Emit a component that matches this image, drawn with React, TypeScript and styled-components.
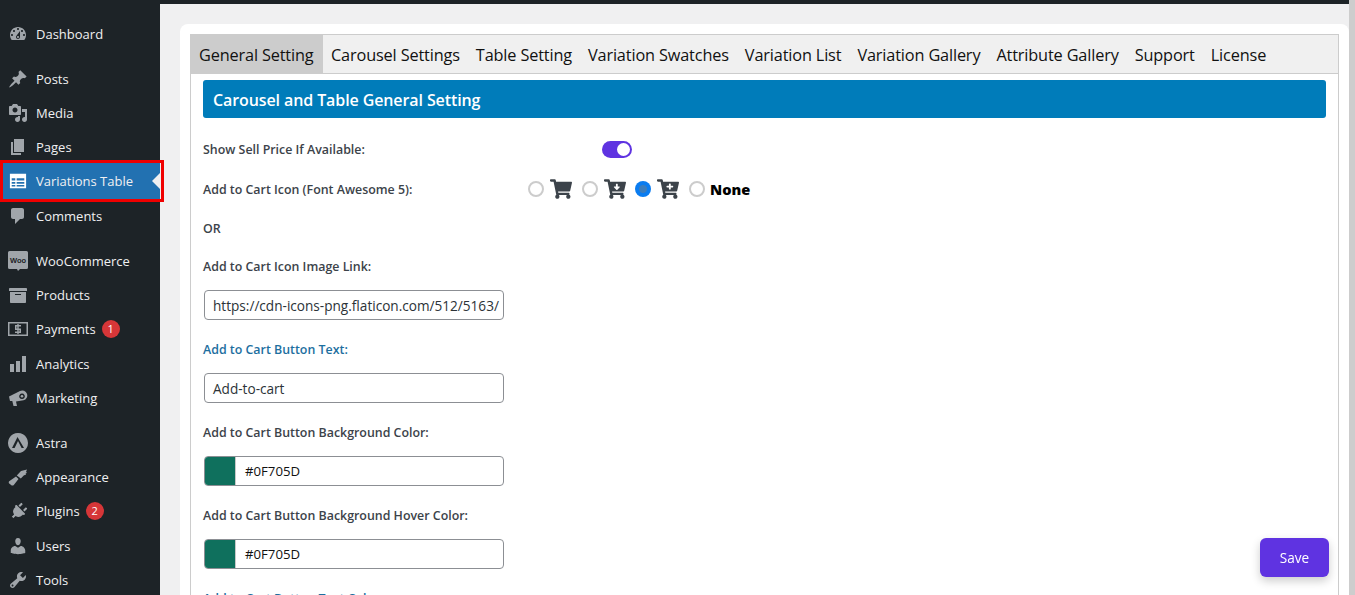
import React from "react";
import styled, { createGlobalStyle } from "styled-components";
import { FaPlug, FaShoppingCart, FaCartArrowDown, FaCartPlus } from "react-icons/fa";

const Global = createGlobalStyle`
  html, body { margin: 0; padding: 0; height: 595px; overflow: hidden; background: #f0f0f1; }
  * { box-sizing: border-box; }
  body { font-family: "Open Sans", "Noto Sans", "Liberation Sans", sans-serif; }
`;

const Page = styled.div`
  display: flex;
  width: 1355px;
  height: 595px;
  overflow: hidden;
`;
const Sidebar = styled.nav`
  flex: 0 0 160px;
  background: #1d2327;
  padding-top: 16.4px;
  display: flex;
  flex-direction: column;
`;
const Item = styled.div<{ $active?: boolean; $gap?: boolean }>`
  position: relative;
  flex: 0 0 34.3px;
  display: flex;
  align-items: center;
  margin-top: ${(p) => (p.$gap ? "10.7px" : "0")};
  padding-left: 8px;
  background: ${(p) => (p.$active ? "#2271b1" : "transparent")};
  color: #f0f0f1;
  font-size: 13px;
  z-index: ${(p) => (p.$active ? 2 : 0)};
  ${(p) =>
    p.$active
      ? `box-shadow: 0 -2px 0 #2271b1;
         &::before { content: ""; position: absolute; right: 0; top: 50%; margin-top: -8px; border: 8px solid transparent; border-right-color: #f0f0f1; border-left-width: 0; }
         &::after { content: ""; position: absolute; left: 0; right: -4px; top: -4px; bottom: -3px; border: 3px solid #f00000; }`
      : ""}
`;
const IconSlot = styled.span<{ $active?: boolean }>`
  flex: 0 0 20px;
  height: 20px;
  margin-right: 8px;
  display: flex;
  align-items: center;
  justify-content: center;
  color: ${(p) => (p.$active ? "#fff" : "#a0a5aa")};
`;
const Badge = styled.span`
  width: 18px;
  height: 18px;
  margin-left: 6px;
  border-radius: 50%;
  background: #d63638;
  color: #fff;
  font-size: 11px;
  line-height: 18px;
  text-align: center;
`;
const Main = styled.main`
  flex: 1;
  min-width: 0;
  display: flex;
  flex-direction: column;
  overflow: hidden;
`;
const TopBar = styled.div`
  flex: 0 0 4px;
  background: #1d2327;
`;
const Workspace = styled.div`
  flex: 1;
  min-height: 0;
  padding: 20px 0 0 20px;
  overflow: hidden;
`;
const Card = styled.section`
  background: #fff;
  border-radius: 8px 8px 0 0;
  padding: 10px 10px 0;
  height: 700px;
`;
const Panel = styled.div`
  border: 1px solid #ccc;
  border-bottom: 0;
  height: 100%;
`;
const Tabs = styled.div`
  display: flex;
  height: 39px;
  background: #f0f0f0;
  border-bottom: 1px solid #ccc;
`;
const Tab = styled.div<{ $active?: boolean }>`
  height: 38px;
  padding: 0 ${(p) => (p.$active ? "9.5px" : "8px")} 0 8px;
  line-height: 40px;
  font-size: 16.3px;
  letter-spacing: -0.15px;
  color: #111;
  white-space: nowrap;
  background: ${(p) => (p.$active ? "#ccc" : "transparent")};
`;
const Body = styled.div`
  padding: 6px 12px 0;
`;
const Heading = styled.h2`
  margin: 0 0 20px;
  height: 38px;
  padding: 0 10px;
  background: #007cba;
  border-radius: 3px;
  color: #fff;
  font-size: 16px;
  font-weight: 600;
  line-height: 40px;
  letter-spacing: -0.1px;
`;
const Row = styled.div<{ $after: number }>`
  display: flex;
  align-items: center;
  height: 22px;
  margin-bottom: ${(p) => p.$after}px;
`;
const Label = styled.label<{ $width?: number; $blue?: boolean; $after?: number }>`
  display: block;
  ${(p) => (p.$width ? `flex: 0 0 ${p.$width}px;` : "")}
  height: 22px;
  padding-top: 1px;
  font-size: 12.4px;
  line-height: 22px;
  font-weight: 600;
  white-space: nowrap;
  color: ${(p) => (p.$blue ? "#1d6f9f" : "#3c434a")};
  margin-bottom: ${(p) => p.$after ?? 0}px;
`;
const Toggle = styled.span`
  position: relative;
  display: block;
  width: 30px;
  height: 17px;
  border-radius: 9px;
  background: #5f33e1;
  &::after {
    content: "";
    position: absolute;
    right: 2px;
    top: 2px;
    width: 13px;
    height: 13px;
    border-radius: 50%;
    background: #fff;
  }
`;
const Radios = styled.div`
  display: flex;
  align-items: center;
`;
const Radio = styled.span<{ $on?: boolean }>`
  width: 16px;
  height: 16px;
  border-radius: 50%;
  margin-right: 6px;
  flex: none;
  border: ${(p) => (p.$on ? "0" : "2px solid #ccc")};
  background: ${(p) => (p.$on ? "radial-gradient(circle, #3b7dbd 0 3.5px, #0a7cf0 4.5px)" : "#fff")};
`;
const CartSlot = styled.span<{ $next: number }>`
  display: flex;
  color: #3c434a;
  font-size: 22px;
  margin-right: ${(p) => p.$next}px;
`;
const NoneText = styled.span`
  margin-left: -1px;
  font-size: 14.6px;
  font-weight: 800;
  color: #000;
`;
const Field = styled.div`
  width: 300px;
  height: 30px;
  margin: 0 0 18px 1px;
  display: flex;
  align-items: center;
  border: 1px solid #8c8f94;
  border-radius: 4px;
  background: #fff;
  overflow: hidden;
  font-size: 13.6px;
  color: #2c3338;
  padding-left: 8px;
  white-space: nowrap;
`;
const ColorField = styled(Field)`
  padding-left: 0;
  color: #111;
  font-size: 13.2px;
`;
const Swatch = styled.span`
  flex: 0 0 31px;
  height: 100%;
  background: #0f705d;
  border-right: 1px solid #c8c8c8;
  margin-right: 9px;
`;
const Scrollbar = styled.div`
  flex: 0 0 6px;
  background: #cdcdcd;
`;
const Save = styled.button`
  position: fixed;
  left: 1260px;
  top: 538px;
  width: 69px;
  height: 39px;
  border: 0;
  border-radius: 6px;
  background: #5f33e1;
  color: #fff;
  font-family: inherit;
  font-size: 13.6px;
  box-shadow: 0 4px 10px rgba(0, 0, 0, 0.2);
`;
const WooText = styled.text`
  font-family: "Liberation Sans", sans-serif;
  font-size: 7.5px;
  font-weight: 700;
  fill: #1d2327;
`;

const Svg: React.FC<{ children: React.ReactNode; w?: number }> = ({ children, w = 20 }) => (
  <svg width={w} height={w} viewBox="0 0 20 20" fill="currentColor">{children}</svg>
);
const Dash: React.FC<{ d: string }> = ({ d }) => <Svg><path d={d} /></Svg>;

const dashboard = "M3.76 16h12.48c1.1-1.37 1.76-3.11 1.76-5 0-4.42-3.58-8-8-8s-8 3.58-8 8c0 1.89.66 3.63 1.76 5zM10 4c.55 0 1 .45 1 1s-.45 1-1 1-1-.45-1-1 .45-1 1-1zM6 6c.55 0 1 .45 1 1s-.45 1-1 1-1-.45-1-1 .45-1 1-1zm8 0c.55 0 1 .45 1 1s-.45 1-1 1-1-.45-1-1 .45-1 1-1zm-5.37 5.55L12 7v6c0 1.1-.9 2-2 2s-2-.9-2-2c0-.57.24-1.08.63-1.45zM4 10c.55 0 1 .45 1 1s-.45 1-1 1-1-.45-1-1 .45-1 1-1zm12 0c.55 0 1 .45 1 1s-.45 1-1 1-1-.45-1-1 .45-1 1-1zm-5 3c0-.55-.45-1-1-1s-1 .45-1 1 .45 1 1 1 1-.45 1-1z";
const post = "M10.44 3.02l1.82-1.82 6.36 6.35-1.83 1.82c-1.05-.68-2.48-.57-3.41.36l-.75.75c-.92.93-1.04 2.35-.35 3.41l-1.83 1.82-2.41-2.41-2.8 2.79c-.42.42-3.38 2.71-3.8 2.29s1.86-3.39 2.28-3.81l2.79-2.79L4.1 9.36l1.83-1.82c1.05.69 2.48.57 3.4-.36l.75-.75c.93-.92 1.05-2.35.36-3.41z";
const media = "M13 11V4c0-.55-.45-1-1-1h-1.67L9 1H5L3.67 3H2c-.55 0-1 .45-1 1v7c0 .55.45 1 1 1h10c.55 0 1-.45 1-1zM7 4.5c1.38 0 2.5 1.12 2.5 2.5S8.38 9.5 7 9.5 4.5 8.38 4.5 7 5.62 4.5 7 4.5zM14 6h5v10.5c0 1.38-1.12 2.5-2.5 2.5S14 17.88 14 16.5s1.12-2.5 2.5-2.5c.17 0 .34.02.5.05V9h-3V6zm-4 8.05V13h2v3.5c0 1.38-1.12 2.5-2.5 2.5S7 17.88 7 16.5 8.12 14 9.5 14c.17 0 .34.02.5.05z";
const page = "M6 15V2h10v13H6zm-1 1h8v2H3V5h2v11z";
const comment = "M5 2h9c1.1 0 2 .9 2 2v7c0 1.1-.9 2-2 2h-2l-5 5v-5H5c-1.1 0-2-.9-2-2V4c0-1.1.9-2 2-2z";
const archive = "M19 4v2H1V4c0-.55.45-1 1-1h16c.55 0 1 .45 1 1zM2 7h16v10c0 .55-.45 1-1 1H3c-.55 0-1-.45-1-1V7zm11 3V9H7v1h6z";
const bars = "M18 18V2h-4v16h4zm-6 0V7H8v11h4zm-6 0v-8H2v8h4z";
const users = "M10 9.25c-2.27 0-2.73-3.44-2.73-3.44C7 4.02 7.82 2 9.97 2c2.16 0 2.98 2.02 2.71 3.81 0 0-.41 3.44-2.68 3.44zm0 2.57L12.72 10c2.39 0 4.52 2.33 4.52 4.53v2.49s-3.65 1.13-7.24 1.13c-3.65 0-7.24-1.13-7.24-1.13v-2.49c0-2.25 1.94-4.48 4.46-4.48z";
const tools = "M16.68 9.77c-1.34 1.34-3.3 1.67-4.95.99l-5.41 6.52c-.99.99-2.59.99-3.57 0-.99-.98-.99-2.58 0-3.57l6.52-5.42c-.68-1.65-.35-3.61.99-4.95 1.28-1.28 3.12-1.62 4.72-1.06l-2.89 2.89 2.82 2.82 2.86-2.87c.53 1.58.18 3.39-1.09 4.67zM3.81 16.21c.4.39 1.04.39 1.43 0 .4-.4.4-1.04 0-1.43-.39-.4-1.03-.4-1.43 0-.39.39-.39 1.03 0 1.43z";

const TableIcon = () => (
  <Svg w={18}>
    <path fillRule="evenodd" d="M1 2h18v16H1z M3 7v2.500h4V7z M8.500 7v2.500H17V7z M3 11v2h4v-2z M8.500 11v2H17v-2z M3 14.500V16h4v-1.500z M8.500 14.500V16H17v-1.500z" />
  </Svg>
);
const WooIcon = () => (
  <Svg>
    <path d="M1.500 0h17A1.500 1.500 0 0 1 20 1.500v15a1.500 1.500 0 0 1-1.500 1.500H12l-2 2-1-2H1.500A1.500 1.500 0 0 1 0 16.500v-15A1.500 1.500 0 0 1 1.500 0z" />
    <WooText x="10" y="12" textAnchor="middle">Woo</WooText>
  </Svg>
);
const PayIcon = () => (
  <Svg>
    <path fillRule="evenodd" d="M0 3h20v14H0z M1.500 4.500v11h17v-11z" />
    <path d="M7 6h6v1.500H8.500v2H13V14H7v-1.500h4.500v-1.500H7z" />
    <path d="M9.300 5h1.400v10H9.300z" />
  </Svg>
);
const AstraIcon = () => (
  <Svg>
    <path fillRule="evenodd" d="M10 0a10 10 0 1 1-.01 0z M9.500 4L4 15h2.600L10 8l3.600 7H16z" />
    <path d="M10.500 11l2 4h-4.500z" />
  </Svg>
);
const MegaIcon = () => (
  <Svg>
    <path fillRule="evenodd" d="M1 8.500L12 3a5 5 0 1 1 3.500 9.300L8 13.500 9 18H5.500l-1.200-5L2 13zM14 5.500a2.800 2.800 0 1 0 .01 0z" />
    <circle cx="14" cy="8.300" r="1.300" />
  </Svg>
);
const BrushIcon = () => (
  <Svg>
    <path d="M1.200 14.200L8 9.500l2.500 2.500L5.800 18c-.8.700-2 .700-2.700 0l-1.900-1.600c-.6-.6-.6-1.600 0-2.200z" />
    <path d="M8.800 8.500L13 4l6-1.500-1 2.500 1 .8-1.500 1 .5 1-2 .5-3.200 3.200z" />
  </Svg>
);

const nav: { label: string; icon: React.ReactNode; gap?: boolean; active?: boolean; badge?: number }[] = [
  { label: "Dashboard", icon: <Dash d={dashboard} /> },
  { label: "Posts", icon: <Dash d={post} />, gap: true },
  { label: "Media", icon: <Dash d={media} /> },
  { label: "Pages", icon: <Dash d={page} /> },
  { label: "Variations Table", icon: <TableIcon />, active: true },
  { label: "Comments", icon: <Dash d={comment} /> },
  { label: "WooCommerce", icon: <WooIcon />, gap: true },
  { label: "Products", icon: <Dash d={archive} /> },
  { label: "Payments", icon: <PayIcon />, badge: 1 },
  { label: "Analytics", icon: <Dash d={bars} /> },
  { label: "Marketing", icon: <MegaIcon /> },
  { label: "Astra", icon: <AstraIcon />, gap: true },
  { label: "Appearance", icon: <BrushIcon /> },
  { label: "Plugins", icon: <FaPlug size={17} style={{ transform: "rotate(45deg)" }} />, badge: 2 },
  { label: "Users", icon: <Dash d={users} /> },
  { label: "Tools", icon: <Dash d={tools} /> },
];
const tabs = ["General Setting", "Carousel Settings", "Table Setting", "Variation Swatches", "Variation List", "Variation Gallery", "Attribute Gallery", "Support", "License"];

export default function App() {
  return (
    <Page>
      <Global />
      <Sidebar>
        {nav.map((n) => (
          <Item key={n.label} $active={n.active} $gap={n.gap}>
            <IconSlot $active={n.active}>{n.icon}</IconSlot>
            {n.label}
            {n.badge ? <Badge>{n.badge}</Badge> : null}
          </Item>
        ))}
      </Sidebar>
      <Main>
        <TopBar />
        <Workspace>
          <Card>
            <Panel>
              <Tabs>
                {tabs.map((t, i) => (
                  <Tab key={t} $active={i === 0}>{t}</Tab>
                ))}
              </Tabs>
              <Body>
                <Heading>Carousel and Table General Setting</Heading>
                <Row $after={18}>
                  <Label $width={399}>Show Sell Price If Available:</Label>
                  <Toggle />
                </Row>
                <Row $after={17}>
                  <Label $width={325}>Add to Cart Icon (Font Awesome 5):</Label>
                  <Radios>
                    <Radio />
                    <CartSlot $next={10}><FaShoppingCart /></CartSlot>
                    <Radio />
                    <CartSlot $next={9}><FaCartArrowDown /></CartSlot>
                    <Radio $on />
                    <CartSlot $next={10}><FaCartPlus /></CartSlot>
                    <Radio />
                    <NoneText>None</NoneText>
                  </Radios>
                </Row>
                <Label $after={16}>OR</Label>
                <Label $after={13}>Add to Cart Icon Image Link:</Label>
                <Field>https://cdn-icons-png.flaticon.com/512/5163/</Field>
                <Label $blue $after={13}>Add to Cart Button Text:</Label>
                <Field>Add-to-cart</Field>
                <Label $after={13}>Add to Cart Button Background Color:</Label>
                <ColorField><Swatch />#0F705D</ColorField>
                <Label $after={13}>Add to Cart Button Background Hover Color:</Label>
                <ColorField><Swatch />#0F705D</ColorField>
                <Label $blue>Add to Cart Button Text Color:</Label>
              </Body>
            </Panel>
          </Card>
        </Workspace>
      </Main>
      <Scrollbar />
      <Save>Save</Save>
    </Page>
  );
}
